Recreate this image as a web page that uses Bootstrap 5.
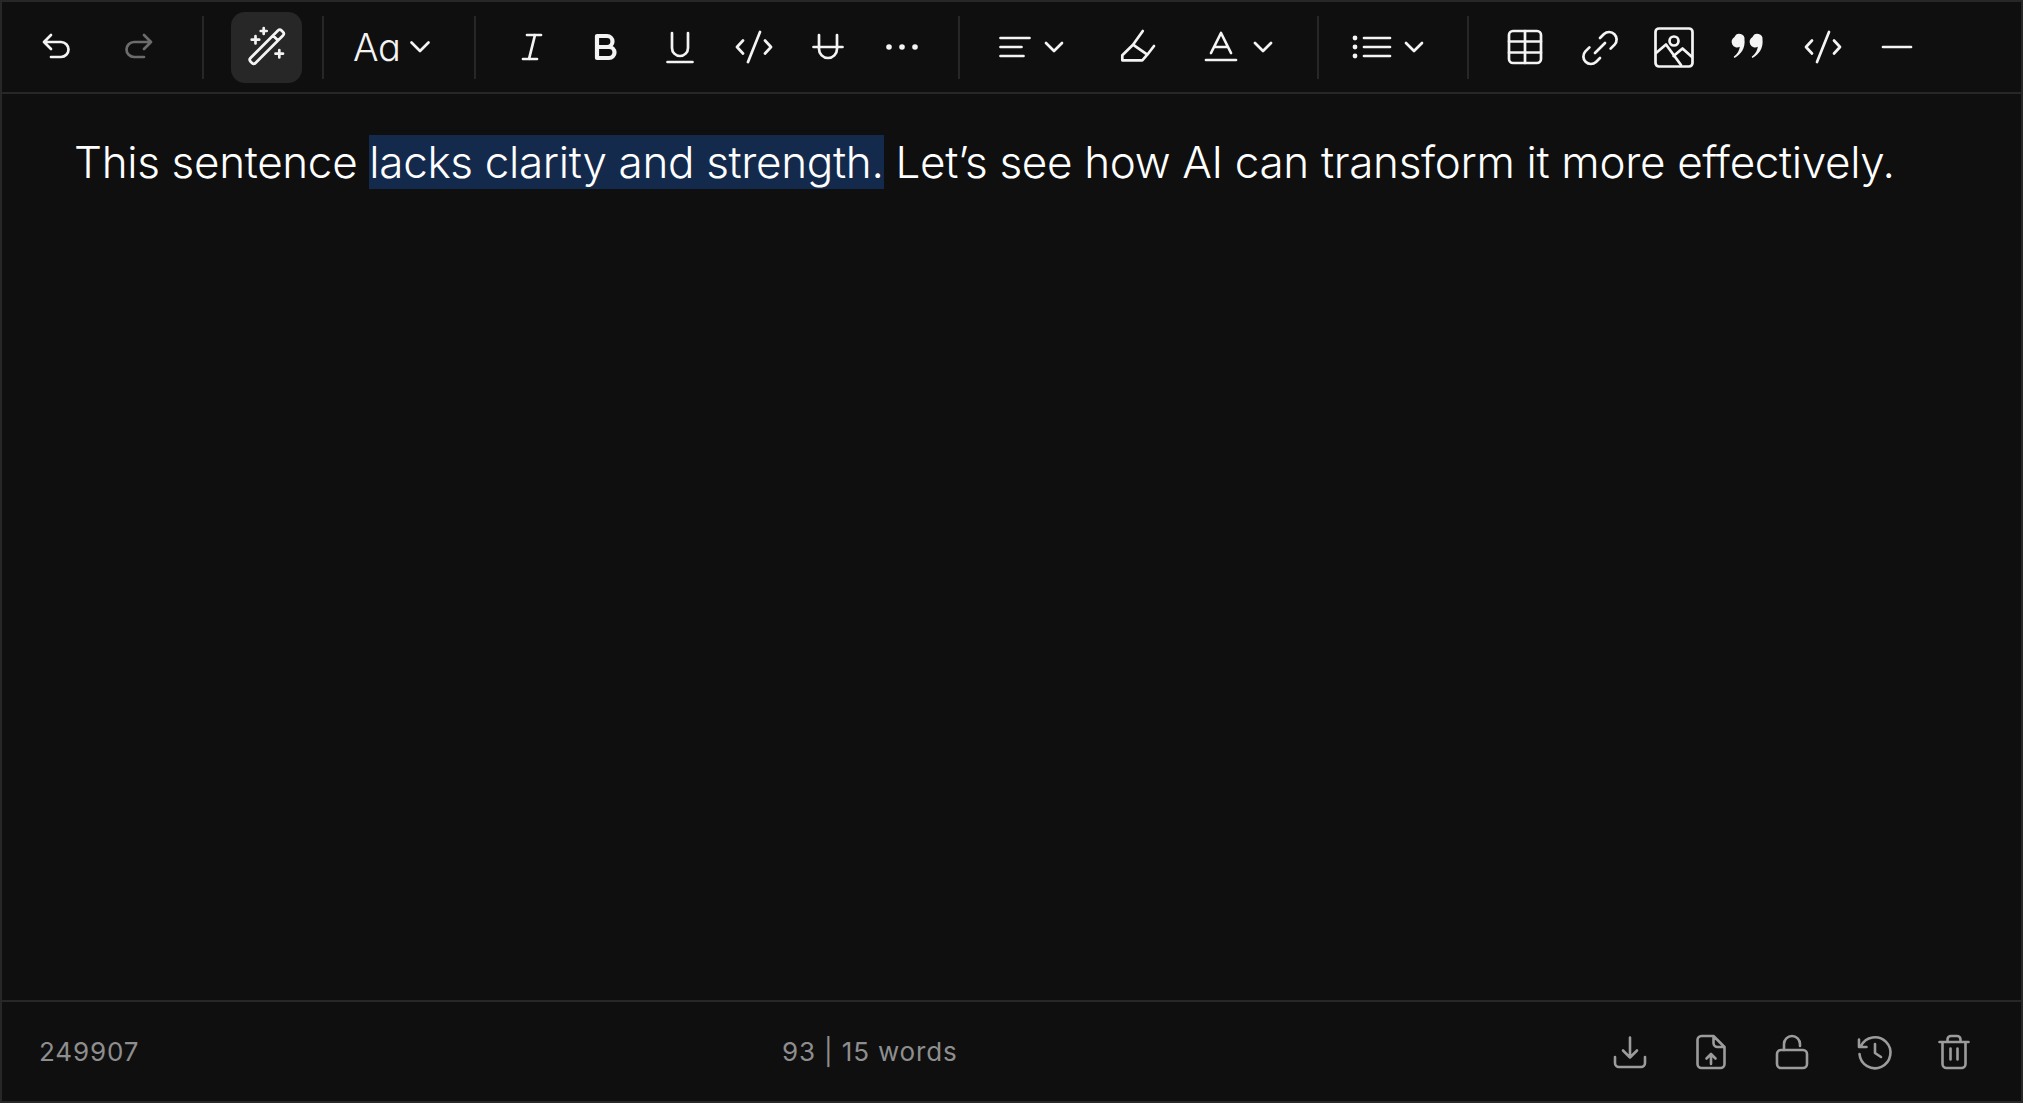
<!doctype html>
<html lang="en">
<head>
<meta charset="utf-8">
<title>Editor</title>
<link href="https://cdn.jsdelivr.net/npm/bootstrap@5.3.0/dist/css/bootstrap.min.css" rel="stylesheet">
<style>
html,body{height:100%;background:#0f0f10;overflow:hidden}
body{font-family:Inter,"Liberation Sans",sans-serif;color:#fff}
.frame{height:1103px;border:2px solid #272727;background:#0f0f10}
.rail{height:92px;border-bottom:2px solid #272727;padding-left:12px}
.cell{height:71px;flex:0 0 auto}
.w83{width:83px}.w74{width:74px}.w744{width:74.4px}
.divider{width:2px;height:63px;background:#272727;flex:0 0 auto}
.wand{width:71px;height:71px;border-radius:14px;background:#272727;flex:0 0 auto}
svg{overflow:visible;flex:0 0 auto;fill:none;stroke:#f4f4f4;stroke-width:2.7;stroke-linecap:round;stroke-linejoin:round}
.dim{stroke:#6c6c6c}
.solid{fill:#f4f4f4;stroke:none}
.heavy{stroke-width:4.2}
.ml13{margin-left:13px}.ml14{margin-left:14px}.ml10{margin-left:10px}.ml19{margin-left:19px}.ml20{margin-left:20px}.ml22{margin-left:22px}.ml27{margin-left:27px}.ml29{margin-left:29px}.ml32{margin-left:32px}.ml35{margin-left:35px}.ml42{margin-left:42px}.ml44{margin-left:44px}.ml45{margin-left:45px}.ml56{margin-left:56px}
.aa{font-size:38px;font-weight:300;line-height:1;font-feature-settings:"cv11";color:#f4f4f4;width:44px;letter-spacing:-.5px}
.body-area{padding:42px 72px 0;font-size:44px;line-height:53px;font-weight:350;letter-spacing:-.33px;white-space:nowrap;color:#fff}
.picked{background:#142a4c}
.foot{height:101px;border-top:2px solid #272727;padding-left:37px;color:#8e8e8e;font-size:26px;letter-spacing:.85px}
.foot svg{stroke:#9c9c9c;stroke-width:2.6}
.foot .solid{fill:#9c9c9c;stroke:none}
.code-id{width:743px}
.foot-cells{padding-right:27px}
.w81{width:81px}
</style>
</head>
<body>
<div class="frame d-flex flex-column">
  <div class="rail d-flex align-items-center">
    <div class="cell w83 d-flex align-items-center justify-content-center"><svg width="40" height="40" viewBox="0 0 40 40"><path d="M15 8 8 15l7 7M8 15h17a7.500 7.500 0 0 1 0 15H15"/></svg></div>
    <div class="cell w83 d-flex align-items-center justify-content-center"><svg class="dim" width="40" height="40" viewBox="0 0 40 40"><path d="M25 8l7 7-7 7M32 15H15a7.500 7.500 0 0 0 0 15h10"/></svg></div>
    <div class="divider ml22"></div>
    <div class="wand ml27 d-flex align-items-center justify-content-center"><svg width="40" height="40" viewBox="0 0 40 40"><path d="M3.500 31 31 3.500a2.500 2.500 0 0 1 3.500 0l1.500 1.500a2.500 2.500 0 0 1 0 3.500L8.500 36a2.500 2.500 0 0 1-3.500 0L3.500 34.500a2.500 2.500 0 0 1 0-3.500zM26 8.500 31 13.500M8.500 9v7.500M4.700 12.700h7.500M16.700 1v6M13.700 4h6M32.300 23v7.500M28.500 26.700H36"/></svg></div>
    <div class="divider ml20"></div>
    <div class="aa ml29 text-center">Aa</div>
    <svg class="ml14" width="18" height="10" viewBox="0 0 18 10" ><path d="M.500 .500 9 9l8.500-8.500"/></svg>
    <div class="divider ml45"></div>
    <div class="d-flex ml19">
      <div class="cell w74 d-flex align-items-center justify-content-center"><svg width="40" height="40" viewBox="0 0 40 40"><path d="M15 8h14M11 32h14M23 8l-6 24"/></svg></div>
      <div class="cell w74 d-flex align-items-center justify-content-center"><svg class="heavy" width="40" height="40" viewBox="0 0 40 40"><path d="M11 9v22h12a5.500 5.500 0 0 0 0-11H11M11 9h10a5.500 5.500 0 0 1 0 11"/></svg></div>
      <div class="cell w74 d-flex align-items-center justify-content-center"><svg width="40" height="40" viewBox="0 0 40 40"><path d="M12 6v15a8 8 0 0 0 16 0V6M7.500 35h25"/></svg></div>
      <div class="cell w74 d-flex align-items-center justify-content-center"><svg width="40" height="40" viewBox="0 0 40 40"><path d="M9 13.500 3 20l6 6.500M31 13.500l6 6.500-6 6.500M26 5 14 35"/></svg></div>
      <div class="cell w74 d-flex align-items-center justify-content-center"><svg width="40" height="40" viewBox="0 0 40 40"><path d="M11 8v14a9 9 0 0 0 18 0V8M5.500 20h29"/></svg></div>
      <div class="cell w74 d-flex align-items-center justify-content-center"><svg width="40" height="40" viewBox="0 0 40 40"><circle class="solid" cx="7" cy="20" r="2.800"/><circle class="solid" cx="20" cy="20" r="2.800"/><circle class="solid" cx="33" cy="20" r="2.800"/></svg></div>
    </div>
    <div class="divider ml19"></div>
    <svg class="ml35" width="40" height="40" viewBox="0 0 40 40"><path d="M5.500 11h29M5.500 20h21M5.500 29h23"/></svg>
    <svg class="ml10" width="18" height="10" viewBox="0 0 18 10"><path d="M1 1 9 9l8-8"/></svg>
    <svg class="ml56" width="40" height="40" viewBox="0 0 40 40"><path d="M3.300 33.300v-5L14 17.700l14.300 10-5 5.600zM28.300 27.700 35 19M14 17.700 23.800 4"/></svg>
    <svg class="ml42" width="40" height="40" viewBox="0 0 40 40"><path d="M10 26 20 6 30 26M13.500 20h13M5 33h30"/></svg>
    <svg class="ml13" width="18" height="10" viewBox="0 0 18 10"><path d="M1 1 9 9l8-8"/></svg>
    <div class="divider ml45"></div>
    <svg class="ml32" width="40" height="40" viewBox="0 0 40 40"><circle class="solid" cx="4" cy="11" r="2.400"/><circle class="solid" cx="4" cy="20" r="2.400"/><circle class="solid" cx="4" cy="29" r="2.400"/><path d="M13 11h26M13 20h26M13 29h26"/></svg>
    <svg class="ml14" width="18" height="10" viewBox="0 0 18 10"><path d="M1 1 9 9l8-8"/></svg>
    <div class="divider ml44"></div>
    <div class="d-flex ml19">
      <div class="cell w744 d-flex align-items-center justify-content-center"><svg width="40" height="40" viewBox="0 0 40 40"><rect x="4" y="4" width="32" height="32" rx="4"/><path d="M4 14.500h32M4 25.500h32M20 4v32"/></svg></div>
      <div class="cell w744 d-flex align-items-center justify-content-center"><svg width="40" height="40" viewBox="0 0 40 40"><path d="M20 11l4-4a7.500 7.500 0 0 1 10.600 10.600l-4 4M20 31l-4 4a7.500 7.500 0 0 1-10.600-10.600l4-4M15 26l10-10"/></svg></div>
      <div class="cell w744 d-flex align-items-center justify-content-center"><svg width="40" height="40" viewBox="0 0 40 40"><rect x="1.500" y="1.500" width="37" height="38" rx="3.500"/><circle cx="20" cy="14" r="4.500"/><path d="M2 26l10-8.500L27 38M19.500 29l9-7.500L38 30"/></svg></div>
      <div class="cell w744 d-flex align-items-center justify-content-center"><svg width="40" height="40" viewBox="0 0 40 40"><path class="solid" d="M6.500 10a5.200 5.200 0 0 1 10 2.500C17.500 21 13 27.500 6.500 31l-.8-1.200C9.500 27 11.500 23 11.800 19.800A5.200 5.200 0 0 1 6.500 10zM24.500 10a5.200 5.200 0 0 1 10 2.500C35.500 21 31 27.500 24.500 31l-.8-1.200C27.500 27 29.500 23 29.800 19.800A5.200 5.200 0 0 1 24.500 10z"/></svg></div>
      <div class="cell w744 d-flex align-items-center justify-content-center"><svg width="40" height="40" viewBox="0 0 40 40"><path d="M9 13.500 3 20l6 6.500M31 13.500l6 6.500-6 6.500M26 5 14 35"/></svg></div>
      <div class="cell w744 d-flex align-items-center justify-content-center"><svg width="40" height="40" viewBox="0 0 40 40"><path d="M6 20h28"/></svg></div>
    </div>
  </div>
  <div class="body-area flex-grow-1">This sentence <span class="picked">lacks clarity and strength.</span> Let’s see how AI can transform it more effectively.</div>
  <div class="foot d-flex align-items-center">
    <div class="code-id">249907</div>
    <div>93 | 15 words</div>
    <div class="foot-cells d-flex ms-auto">
      <div class="w81 d-flex justify-content-center"><svg width="40" height="40" viewBox="0 0 40 40"><path d="M20 5.500v20M13 18.500l7 7 7-7M5 25v6a4 4 0 0 0 4 4h22a4 4 0 0 0 4-4v-6"/></svg></div>
      <div class="w81 d-flex justify-content-center"><svg width="40" height="40" viewBox="0 0 40 40"><path d="M22.500 4H10.500a4 4 0 0 0-4 4v24a4 4 0 0 0 4 4h19a4 4 0 0 0 4-4V15zM22.500 4v7a4 4 0 0 0 4 4h7M20 32V22M15.500 26.500 20 22l4.500 4.500"/></svg></div>
      <div class="w81 d-flex justify-content-center"><svg width="40" height="40" viewBox="0 0 40 40"><rect x="5" y="18" width="30" height="18" rx="4"/><path d="M12 18v-6a8 8 0 0 1 16 0v2"/></svg></div>
      <div class="w81 d-flex justify-content-center"><svg width="40" height="40" viewBox="0 0 40 40"><path d="M8 14a15.500 15.500 0 1 1-1.500 8M6 7.500V15h7.500M22 12v9l6 4"/></svg></div>
      <div class="w81 d-flex justify-content-center"><svg width="40" height="40" viewBox="0 0 40 40"><path d="M5.500 10h29M13.500 10V7.500a3.500 3.500 0 0 1 3.500-3.500h6a3.500 3.500 0 0 1 3.500 3.500V10M8.500 10v22a4 4 0 0 0 4 4h15a4 4 0 0 0 4-4V10M16.500 16.500v11M23.500 16.500v11"/></svg></div>
    </div>
  </div>
</div>
<script src="https://cdn.jsdelivr.net/npm/bootstrap@5.3.0/dist/js/bootstrap.bundle.min.js"></script>
</body>
</html>
